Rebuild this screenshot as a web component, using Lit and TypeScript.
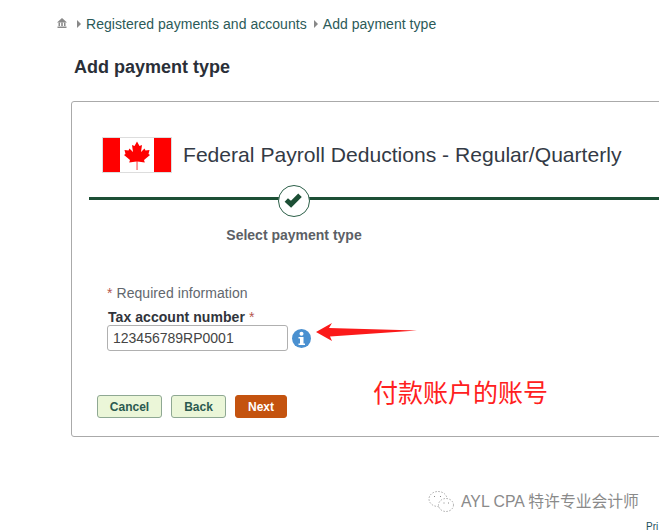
import { LitElement, html, css } from "lit";
import { customElement } from "lit/decorators.js";

@customElement("app-root")
export class AppRoot extends LitElement {
  static styles = css`
    :host {
      display: block;
      position: relative;
      width: 659px;
      height: 530px;
      overflow: hidden;
      background: #fff;
      font-family: "Liberation Sans", Arial, sans-serif;
      color: #333;
    }
    .crumbs {
      display: flex;
      align-items: center;
      height: 18px;
      padding: 15px 0 0 57px;
      font-size: 14px;
      letter-spacing: 0.04px;
      color: #2b5a58;
    }
    .home { width: 10px; height: 10px; margin-right: 10px; margin-top: -3px; }
    .tri { width: 4px; height: 8px; margin-right: 5px; }
    .tri.second { margin-left: 7px; margin-right: 5px; }
    h1 {
      margin: 23px 0 0 74px;
      font-size: 18px;
      line-height: 22px;
      font-weight: 700;
      color: #2a2f38;
    }
    .card {
      box-sizing: border-box;
      margin: 23px 0 0 71px;
      width: 640px;
      height: 336px;
      border: 1px solid #aaa;
      border-radius: 3px;
      padding: 35px 0 0 17px;
    }
    .head {
      display: flex;
      align-items: center;
      gap: 11px;
      margin-left: 13px;
      height: 36px;
    }
    .flag { width: 70px; height: 36px; display: block; }
    .head h2 {
      margin: 0;
      font-size: 21.1px;
      font-weight: 400;
      color: #333a45;
      white-space: nowrap;
    }
    .track {
      position: relative;
      display: flex;
      justify-content: center;
      align-items: center;
      width: 410px;
      height: 32px;
      margin-top: 12px;
    }
    .track::before {
      content: "";
      position: absolute;
      left: 0;
      right: -200px;
      top: 12px;
      height: 3px;
      background: #1c4f35;
    }
    .step {
      position: relative;
      width: 32px;
      height: 32px;
      display: block;
    }
    .step-label {
      width: 410px;
      margin-top: 9px;
      text-align: center;
      font-size: 14px;
      line-height: 18px;
      font-weight: 700;
      color: #5c5f66;
    }
    .req {
      margin: 40px 0 0 18px;
      font-size: 14px;
      line-height: 18px;
      letter-spacing: 0.06px;
      color: #62676e;
    }
    .req i, .lab i { font-style: normal; color: #b5584f; }
    .lab {
      margin: 7px 0 0 19px;
      font-size: 14px;
      line-height: 16px;
      font-weight: 700;
      letter-spacing: 0.06px;
      color: #30343b;
    }
    .lab i { font-weight: 400; }
    .field {
      display: flex;
      align-items: center;
      gap: 4px;
      margin: 0 0 0 18px;
    }
    .inp {
      box-sizing: border-box;
      width: 181px;
      height: 26px;
      padding: 0 5px;
      border: 1px solid #b0b0b0;
      border-radius: 3px;
      font: 14px/24px "Liberation Sans", Arial, sans-serif;
      color: #444;
    }
    .info { width: 19px; height: 19px; display: block; margin-top: 1px; }
    .btns {
      display: flex;
      gap: 9px;
      margin: 44px 0 0 8px;
    }
    button {
      box-sizing: border-box;
      height: 23px;
      padding: 0;
      border: 1px solid #8fa893;
      border-radius: 3px;
      background: #ebf6d8;
      color: #2b5a50;
      font: 700 12px "Liberation Sans", Arial, sans-serif;
    }
    .cancel { width: 65px; }
    .back { width: 55px; }
    .next { width: 52px; background: #c4530f; border-color: #c4530f; color: #fff; }
    .arrow { position: absolute; left: 316px; top: 322px; width: 102px; height: 20px; }
    .note {
      position: absolute;
      left: 373px;
      top: 377px;
      font-size: 25px;
      line-height: 29px;
      color: #ff2020;
      font-family: "Noto Sans CJK SC", sans-serif;
    }
    .mark {
      position: absolute;
      left: 428px;
      top: 490px;
      display: flex;
      align-items: center;
      gap: 6px;
      font-size: 15.8px;
      line-height: 24px;
      color: #8a8a8a;
      font-family: "Liberation Sans", "Noto Sans CJK SC", sans-serif;
      white-space: nowrap;
    }
    .mark svg { width: 27px; height: 24px; }
    .pri {
      position: absolute;
      left: 646px;
      top: 520px;
      font-size: 10px;
      line-height: 13px;
      color: #1d4f5c;
    }
  `;

  render() {
    const tri = (cls = "") => html`<svg class="tri ${cls}" viewBox="0 0 4 8"><path d="M0 0l4 4-4 4z" fill="#888"/></svg>`;
    return html`
      <div class="crumbs">
        <svg class="home" viewBox="0 0 10 10"><path d="M5 0L0 4.500h10zM1.500 4.800h1.500v3.200H1.500zM4.200 4.800h1.600v3.200H4.200zM7 4.800h1.500v3.200H7zM.5 8.400h9V10h-9z" fill="#8a8a8a"/></svg>
        ${tri()}<span>Registered payments and accounts</span>${tri("second")}<span>Add payment type</span>
      </div>
      <h1>Add payment type</h1>
      <section class="card">
        <div class="head">
          <svg class="flag" viewBox="0 0 70 36">
            <rect x="0.500" y="0.500" width="69" height="35" fill="#fff" stroke="#ddd"/>
            <rect x="1" y="1" width="17" height="34" fill="#f00"/>
            <rect x="52" y="1" width="17" height="34" fill="#f00"/>
            <rect x="34.400" y="24" width="1.300" height="9" fill="#f66"/>
            <path d="M35 4.500L37.500 9 40 8 39 15 42.500 11.500 43.500 13.500 47.500 13 46.500 17 48 18 42 23 42.800 25.500 35.500 24.500H34.500L27.200 25.500 28 23 22 18 23.500 17 22.500 13 26.500 13.500 27.500 11.500 31 15 30 8 32.500 9z" fill="#f00"/>
          </svg>
          <h2>Federal Payroll Deductions - Regular/Quarterly</h2>
        </div>
        <div class="track">
          <svg class="step" viewBox="0 0 32 32">
            <circle cx="16" cy="16" r="15.500" fill="#fff" stroke="#2c5f48"/>
            <path d="M8.300 15l4.700 4.200 9-9" fill="none" stroke="#1c4f35" stroke-width="5"/>
          </svg>
        </div>
        <div class="step-label">Select payment type</div>
        <div class="req"><i>*</i> Required information</div>
        <div class="lab">Tax account number <i>*</i></div>
        <div class="field">
          <div class="inp">123456789RP0001</div>
          <svg class="info" viewBox="0 0 19 19">
            <circle cx="9.500" cy="9.500" r="9.500" fill="#4a90d0"/>
            <circle cx="9.500" cy="4.800" r="2" fill="#fff"/>
            <path d="M6.500 8h5v6.500h1.500V16H6.500v-1.500H8V9.500H6.500z" fill="#fff"/>
          </svg>
        </div>
        <div class="btns">
          <button class="cancel">Cancel</button>
          <button class="back">Back</button>
          <button class="next">Next</button>
        </div>
      </section>
      <svg class="arrow" viewBox="0 0 102 20"><path d="M0 10L16 1 13 6 101 8.500 14 14.500 16 19z" fill="#fb1a1a"/></svg>
      <div class="note">付款账户的账号</div>
      <div class="mark">
        <svg viewBox="0 0 27 24" fill="none" stroke="#aaa" stroke-dasharray="1.500 1.500">
          <ellipse cx="10" cy="9" rx="9" ry="7.500"/>
          <ellipse cx="18" cy="15" rx="7.500" ry="6.500" fill="#fff"/>
          <path d="M6 6.500h1M12 6.500h1M15.500 13h1M20 13h1" stroke="#888" stroke-dasharray="none"/>
        </svg>
        <span>AYL CPA 特许专业会计师</span>
      </div>
      <div class="pri">Pri</div>
    `;
  }
}
